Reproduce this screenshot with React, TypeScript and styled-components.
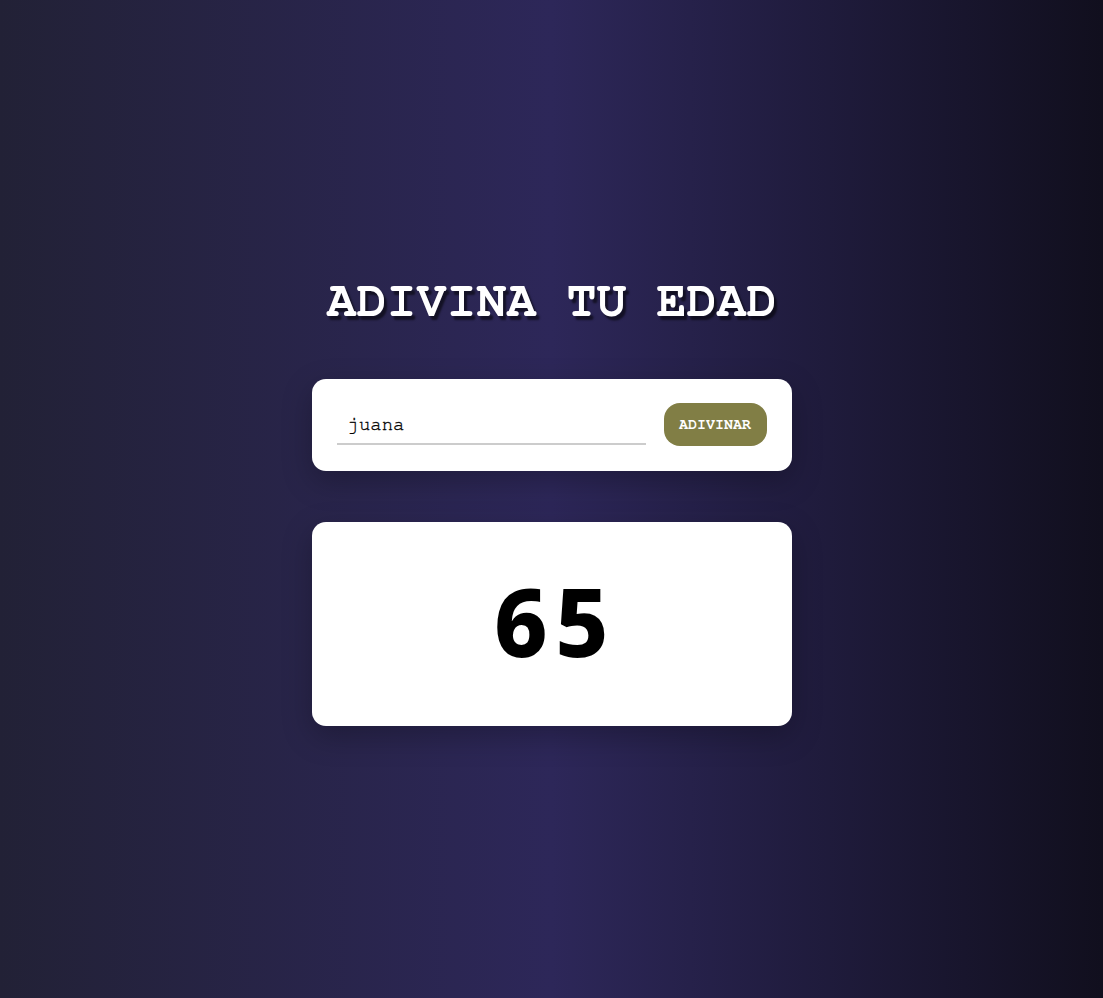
import React from "react";
import styled, { createGlobalStyle } from "styled-components";

const Global = createGlobalStyle`
  html, body { margin: 0; padding: 0; }
  body {
    min-height: 100vh;
    background: linear-gradient(to right, #222136 0%, #2d2759 50%, #110f1e 100%);
    font-family: FreeMono, "Courier New", monospace;
  }
`;

const Page = styled.main`
  min-height: 100vh;
  display: flex;
  flex-direction: column;
  align-items: center;
  justify-content: center;
  box-sizing: border-box;
  padding-top: 3px;
`;

const Title = styled.h1`
  margin: 0 0 53px;
  font-family: FreeMono, "Courier New", monospace;
  font-weight: 900;
  font-size: 50px;
  color: #ffffff;
  text-shadow: 3px 4px 2px rgba(0, 0, 0, 0.55);
  line-height: 1;
`;

const Card = styled.section<{ $tall?: boolean }>`
  width: 480px;
  box-sizing: border-box;
  background: #ffffff;
  border-radius: 14px;
  box-shadow: 0 10px 30px rgba(0, 0, 0, 0.25);
  display: flex;
  align-items: center;
  justify-content: ${(p) => (p.$tall ? "center" : "space-between")};
  padding: ${(p) => (p.$tall ? "0 0 6px" : "25px")};
  height: ${(p) => (p.$tall ? "204px" : "92px")};
  gap: 18px;
  & + & { margin-top: 51px; }
`;

const Input = styled.input`
  flex: 1;
  border: none;
  border-bottom: 2px solid #cccccc;
  outline: none;
  font-family: FreeMono, "Courier New", monospace;
  font-size: 19px;
  color: #000;
  -webkit-text-stroke: 0.3px #000;
  padding: 8px 11px 9px;
  background: transparent;
  margin-top: 2px;
`;

const Button = styled.button`
  background: #817e45;
  color: #ffffff;
  border: none;
  border-radius: 16px;
  height: 43px;
  width: 103px;
  padding: 0;
  font-family: FreeMono, "Courier New", monospace;
  font-weight: bold;
  font-size: 15px;
  cursor: pointer;
`;

const Result = styled.div`
  font-family: "Noto Sans Mono", "DejaVu Sans Mono", monospace;
  font-weight: 800;
  font-size: 95px;
  letter-spacing: 4px;
  padding-left: 4px;
  color: #000;
  line-height: 1;
`;

export default function App() {
  return (
    <>
      <Global />
      <Page>
        <Title>ADIVINA TU EDAD</Title>
        <Card>
          <Input defaultValue="juana" />
          <Button>ADIVINAR</Button>
        </Card>
        <Card $tall>
          <Result>65</Result>
        </Card>
      </Page>
    </>
  );
}
